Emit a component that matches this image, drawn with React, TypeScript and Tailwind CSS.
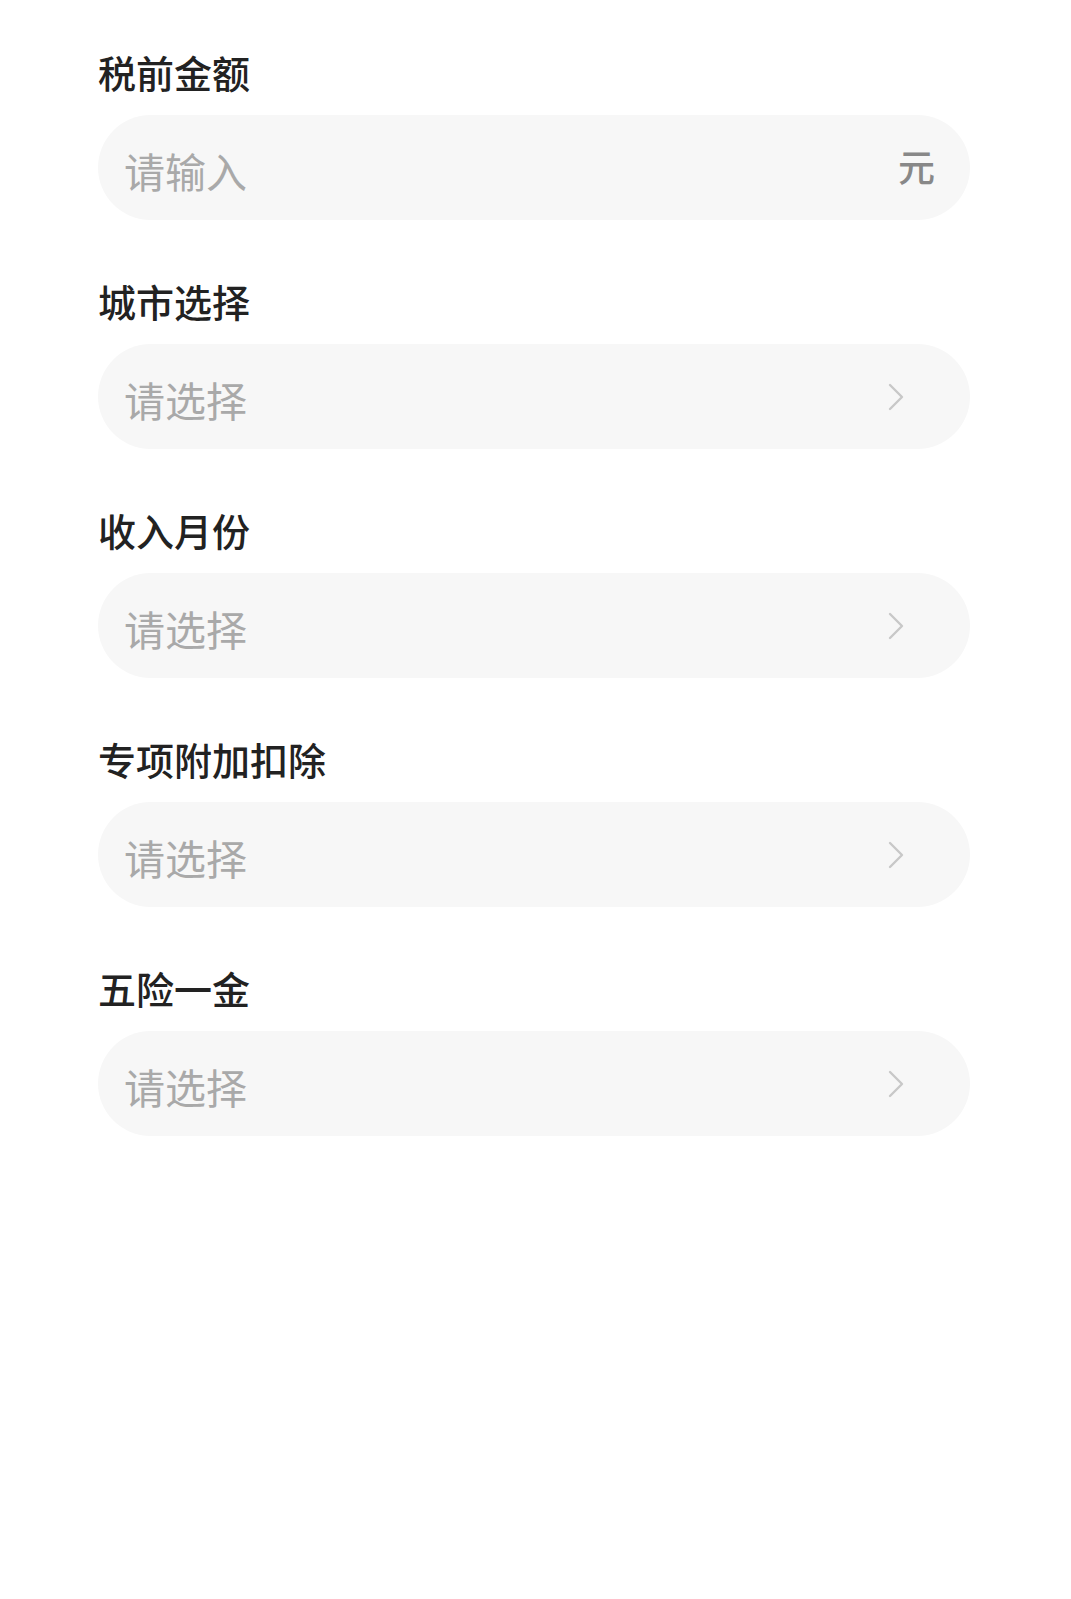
const fields = [
  { label: '税前金额', placeholder: '请输入', suffix: '元' },
  { label: '城市选择', placeholder: '请选择' },
  { label: '收入月份', placeholder: '请选择' },
  { label: '专项附加扣除', placeholder: '请选择' },
  { label: '五险一金', placeholder: '请选择' },
]

function Chevron() {
  return (
    <svg width="18" height="30" viewBox="0 0 18 30" fill="none" className="shrink-0">
      <path d="M3 3 L15 15 L3 27" stroke="#c8c8c8" strokeWidth="2.4" strokeLinecap="round" strokeLinejoin="round" />
    </svg>
  )
}

function Field(props: { label: string; placeholder: string; suffix?: string }) {
  const { label, placeholder, suffix } = props
  return (
    <div className="flex flex-col">
      <div className="h-[46px] text-[38px] leading-[46px] font-medium text-[#222]">{label}</div>
      <div className="mt-[20px] flex h-[105px] items-center justify-between rounded-full bg-[#f7f7f7] pt-[6px] pr-[35px] pl-[26px]">
        <span className="text-[41px] text-[#a9a9a9]">{placeholder}</span>
        {suffix ? (
          <span className="pb-[8px] text-[37px] font-medium text-[#888]">{suffix}</span>
        ) : (
          <span className="pr-[30px] pb-[6px]"><Chevron /></span>
        )}
      </div>
    </div>
  )
}

export default function App() {
  return (
    <div
      className="min-h-[1599px] w-full bg-white"
      style={{ fontFamily: '"Noto Sans CJK SC", "Noto Sans", sans-serif' }}
    >
      <div className="flex flex-col gap-[58px] pt-[49px] pr-[101px] pl-[98px]">
        {fields.map(f => (
          <Field key={f.label} {...f} />
        ))}
      </div>
    </div>
  )
}
